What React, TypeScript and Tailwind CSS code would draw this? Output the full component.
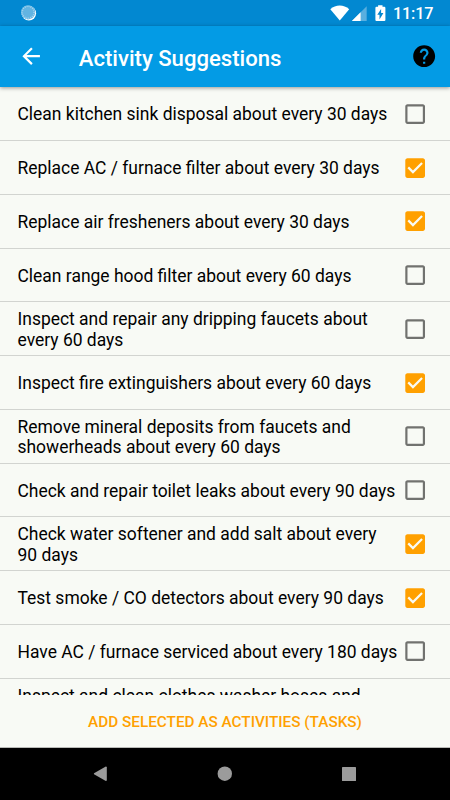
import React from "react";

type Item = { lines: string[]; checked?: boolean };

const items: Item[] = [
  { lines: ["Clean kitchen sink disposal about every 30 days"] },
  { lines: ["Replace AC / furnace filter about every 30 days"], checked: true },
  { lines: ["Replace air fresheners about every 30 days"], checked: true },
  { lines: ["Clean range hood filter about every 60 days"] },
  { lines: ["Inspect and repair any dripping faucets about", "every 60 days"] },
  { lines: ["Inspect fire extinguishers about every 60 days"], checked: true },
  { lines: ["Remove mineral deposits from faucets and", "showerheads about every 60 days"] },
  { lines: ["Check and repair toilet leaks about every 90 days"] },
  { lines: ["Check water softener and add salt about every", "90 days"], checked: true },
  { lines: ["Test smoke / CO detectors about every 90 days"], checked: true },
  { lines: ["Have AC / furnace serviced about every 180 days"] },
  { lines: ["Inspect and clean clothes washer hoses and"] },
];

function Checkbox({ checked }: { checked?: boolean }) {
  return (
    <svg className="h-[26.3px] w-[26.3px] shrink-0" viewBox="0 0 24 24">
      {checked ? (
        <path
          fill="#ffa000"
          d="M19 3H5c-1.11 0-2 .9-2 2v14c0 1.1.89 2 2 2h14c1.11 0 2-.9 2-2V5c0-1.1-.89-2-2-2zm-9 14l-5-5 1.41-1.41L10 14.17l7.59-7.59L19 8l-9 9z"
        />
      ) : (
        <path
          fill="#71726f"
          d="M19 5v14H5V5h14m0-2H5c-1.1 0-2 .9-2 2v14c0 1.1.9 2 2 2h14c1.1 0 2-.9 2-2V5c0-1.1-.9-2-2-2z"
        />
      )}
    </svg>
  );
}

function StatusBar() {
  return (
    <div className="flex h-[26px] shrink-0 items-center bg-[#0288d1] pl-[20px] pr-[17px] text-white">
      <svg className="h-[18px] w-[18px]" viewBox="0 0 18 18">
        <circle cx="8.9" cy="9.3" r="7.2" fill="#fff" />
        <circle cx="8.1" cy="8.3" r="7.1" fill="#62b4e2" />
        <circle cx="8.1" cy="8.3" r="6" fill="none" stroke="#a7d5ee" strokeWidth="1.6" strokeDasharray="1 1" />
      </svg>
      <svg className="ml-auto h-[18px] w-[58px]" viewBox="0 0 58 18">
        <path fill="#fff" d="M0.3 5.2C5.6.2 13.8.2 19.2 5.2L9.8 16.4Z" />
        <path fill="#59afdf" d="M36.7 2.3V17H21.8Z" />
        <path fill="#fff" d="M30.6 8.3V17H21.8Z" />
        <path fill="#fff" d="M48.1 1.2h4.4v1.6h1.8q1.1 0 1.1 1.1v12q0 1.1-1.1 1.1h-7.8q-1.1 0-1.1-1.1v-12q0-1.1 1.1-1.1h1.6z" />
        <path fill="#0288d1" d="M51.1 4.9v4h2.3l-3.9 6.5v-4.7h-2.2z" />
      </svg>
      <span className="ml-[5px] w-[40px] whitespace-nowrap pt-[2px] text-[16.2px] leading-[26px] font-medium tracking-[-0.15px]">11:17</span>
    </div>
  );
}

function AppBar() {
  return (
    <header className="z-10 flex h-[61px] shrink-0 items-center bg-[#039be5] pl-[17.5px] pr-[13px] shadow-[0_1px_4px_rgba(0,0,0,0.4)]">
      <svg className="h-[26.3px] w-[26.3px]" viewBox="0 0 24 24" fill="#fff">
        <path d="M20 11H7.83l5.59-5.59L12 4l-8 8 8 8 1.41-1.41L7.83 13H20v-2z" />
      </svg>
      <h1 className="ml-[35px] whitespace-nowrap pt-[3px] text-[22.1px] leading-[26px] font-medium text-white">Activity Suggestions</h1>
      <svg className="ml-auto h-[26.3px] w-[26.3px]" viewBox="0 0 24 24">
        <path d="M12 2C6.48 2 2 6.48 2 12s4.48 10 10 10 10-4.48 10-10S17.52 2 12 2zm1 17h-2v-2h2v2zm2.07-7.75l-.9.92C13.45 12.9 13 13.5 13 15h-2v-.5c0-1.1.45-2.1 1.17-2.83l1.24-1.26c.37-.36.59-.86.59-1.41 0-1.1-.9-2-2-2s-2 .9-2 2H8c0-2.21 1.79-4 4-4s4 1.79 4 4c0 .88-.36 1.68-.93 2.25z" />
      </svg>
    </header>
  );
}

export default function App() {
  return (
    <div className="flex h-[800px] w-[450px] flex-col overflow-hidden bg-[#f8faf5] font-[Roboto,sans-serif]">
      <StatusBar />
      <AppBar />
      <ul className="h-[608px] shrink-0 overflow-hidden pt-[0.4px]">
        {items.map((item) => (
          <li
            key={item.lines[0]}
            className="flex h-[53.75px] items-center justify-between border-b border-[#d2d4d0] pl-[17.5px] pr-[21.8px] pt-[0.4px]"
          >
            <div
              className={
                item === items[items.length - 1]
                  ? "h-[41px] whitespace-nowrap pt-[1px] text-[17.47px] leading-[20.5px] text-black"
                  : "whitespace-nowrap pt-[1.4px] text-[17.47px] leading-[20.5px] text-black"
              }
            >
              {item.lines.map((line) => (
                <div key={line}>{line}</div>
              ))}
            </div>
            <Checkbox checked={item.checked} />
          </li>
        ))}
      </ul>
      <button className="h-[52px] shrink-0 pt-[2px] text-center text-[15.3px] leading-[50px] font-medium text-[#ffa000]">
        ADD SELECTED AS ACTIVITIES (TASKS)
      </button>
      <nav className="h-[53px] shrink-0 border-t border-[#b9bab7] bg-black">
        <svg className="h-[52px] w-[450px]" viewBox="0 0 450 52" fill="#9b9b9b">
          <path d="M94 25.2Q93.8 25.7 94 26.2L105.8 33Q106.8 33 106.8 32.2V19.2Q106.8 18.4 105.8 18.4Z" />
          <circle cx="224.8" cy="25.7" r="7.2" />
          <rect x="342" y="19" width="14" height="14" rx=".6" />
        </svg>
      </nav>
    </div>
  );
}
